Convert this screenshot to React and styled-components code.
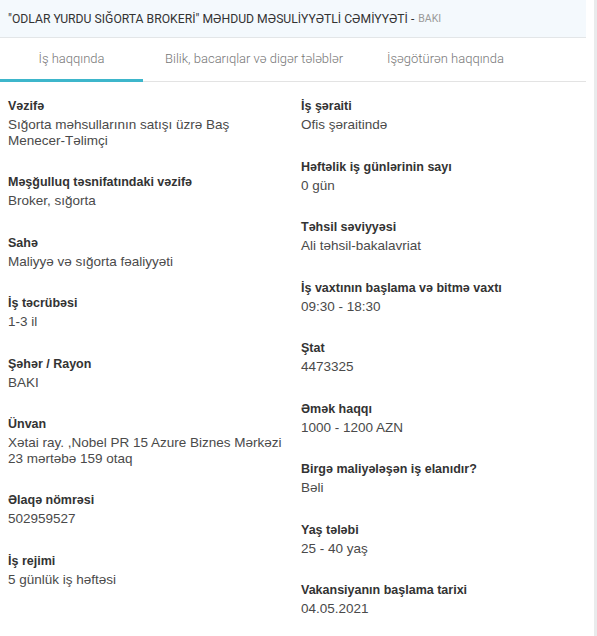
import React, { useState } from "react";
import styled, { createGlobalStyle } from "styled-components";

const GlobalStyle = createGlobalStyle`
  html, body {
    margin: 0;
    padding: 0;
    background: #fff;
  }
  body {
    font-family: "Liberation Sans", Arial, sans-serif;
  }
`;

const Page = styled.div`
  display: flex;
  width: 597px;
  height: 636px;
  overflow: hidden;
`;

const Card = styled.div`
  width: 586px;
  flex-shrink: 0;
`;

const Track = styled.div`
  margin-left: auto;
  width: 3px;
  background: #e9ebec;
`;

const Header = styled.div`
  height: 37px;
  display: flex;
  align-items: center;
  padding: 0 8px;
  background: #f4f9fd;
  border-bottom: 1px solid #e3e6e8;
  font-family: Roboto, "Liberation Sans", sans-serif;
  font-size: 12.2px;
  color: #333;
  white-space: nowrap;
`;

const City = styled.span`
  margin-left: 4px;
  font-size: 10.5px;
  color: #9a9a9a;
`;

const Tabs = styled.div`
  display: flex;
  height: 43px;
  border-bottom: 1px solid #e3e3e3;
`;

const Tab = styled.div`
  display: flex;
  align-items: center;
  justify-content: center;
  min-width: ${(p) => (p.$active ? "143px" : "auto")};
  padding: 0 22px;
  box-sizing: border-box;
  font-family: Roboto, "Liberation Sans", sans-serif;
  font-size: 13px;
  font-weight: 300;
  color: #777;
  border-bottom: 3px solid ${(p) => (p.$active ? "#3db6cb" : "transparent")};
  margin-bottom: -1px;
  cursor: pointer;
`;

const Grid = styled.div`
  display: grid;
  grid-template-columns: 293px 1fr;
  padding: 15px 8px 0;
`;

const Column = styled.div`
  display: flex;
  flex-direction: column;
`;

const Field = styled.div`
  margin-bottom: 25px;
`;

const Label = styled.div`
  font-size: 12.5px;
  font-weight: bold;
  line-height: 18px;
  color: #333;
`;

const Value = styled.div`
  margin-top: 2px;
  font-size: 13.5px;
  line-height: 15.5px;
  color: #4a4a4a;
  white-space: pre-line;
`;

const left = [
  ["Vəzifə", "Sığorta məhsullarının satışı üzrə Baş\nMenecer-Təlimçi"],
  ["Məşğulluq təsnifatındaki vəzifə", "Broker, sığorta"],
  ["Sahə", "Maliyyə və sığorta fəaliyyəti"],
  ["İş təcrübəsi", "1-3 il"],
  ["Şəhər / Rayon", "BAKI"],
  ["Ünvan", "Xətai ray. ,Nobel PR 15 Azure Biznes Mərkəzi\n23 mərtəbə 159 otaq"],
  ["Əlaqə nömrəsi", "502959527"],
  ["İş rejimi", "5 günlük iş həftəsi"],
];

const right = [
  ["İş şəraiti", "Ofis şəraitində"],
  ["Həftəlik iş günlərinin sayı", "0 gün"],
  ["Təhsil səviyyəsi", "Ali təhsil-bakalavriat"],
  ["İş vaxtının başlama və bitmə vaxtı", "09:30 - 18:30"],
  ["Ştat", "4473325"],
  ["Əmək haqqı", "1000 - 1200 AZN"],
  ["Birgə maliyələşən iş elanıdır?", "Bəli"],
  ["Yaş tələbi", "25 - 40 yaş"],
  ["Vakansiyanın başlama tarixi", "04.05.2021"],
];

const tabs = ["İş haqqında", "Bilik, bacarıqlar və digər tələblər", "İşəgötürən haqqında"];

const FieldList = ({ items }) => (
  <Column>
    {items.map(([label, value]) => (
      <Field key={label}>
        <Label>{label}</Label>
        <Value>{value}</Value>
      </Field>
    ))}
  </Column>
);

export default function App() {
  const [active, setActive] = useState(0);
  return (
    <Page>
      <GlobalStyle />
      <Card>
        <Header>
          "ODLAR YURDU SIĞORTA BROKERİ" MƏHDUD MƏSULİYYƏTLİ CƏMİYYƏTİ -
          <City>BAKI</City>
        </Header>
        <Tabs>
          {tabs.map((t, i) => (
            <Tab key={t} $active={i === active} onClick={() => setActive(i)}>
              {t}
            </Tab>
          ))}
        </Tabs>
        <Grid>
          <FieldList items={left} />
          <FieldList items={right} />
        </Grid>
      </Card>
      <Track />
    </Page>
  );
}
